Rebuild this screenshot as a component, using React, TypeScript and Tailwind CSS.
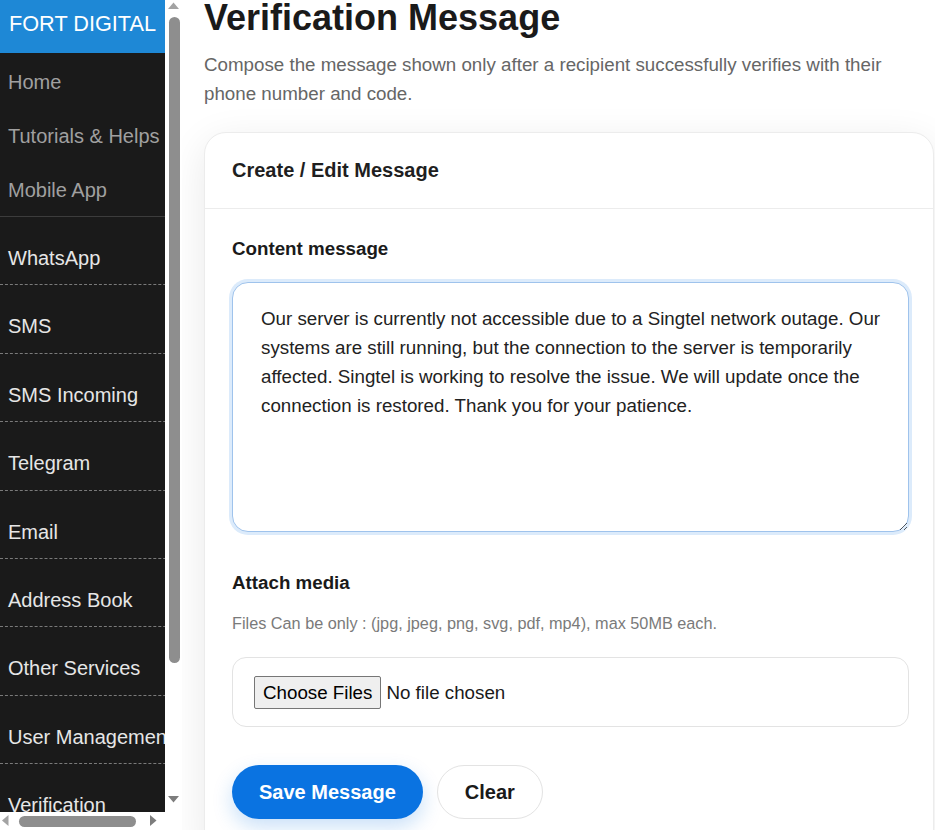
import React from "react";

const topItems = ["Home", "Tutorials & Helps", "Mobile App"];
const mainItems = [
  "WhatsApp",
  "SMS",
  "SMS Incoming",
  "Telegram",
  "Email",
  "Address Book",
  "Other Services",
  "User Management",
  "Verification",
  "Reports",
  "Logout",
];

function VScrollbar() {
  return (
    <div className="flex h-full flex-col bg-white">
      <svg width="17" height="15" viewBox="0 0 17 15" className="shrink-0">
        <polygon points="3,9 8.5,2.5 14,9" fill="#a3a3a3" />
      </svg>
      <div className="ml-[3.5px] mt-[2px] h-[646px] w-[11px] rounded-full bg-[#8e8e8e]" />
      <div className="flex-1" />
      <svg width="17" height="15" viewBox="0 0 17 15" className="mb-[4px] shrink-0">
        <polygon points="3,3 8.5,9.5 14,3" fill="#7d7d7d" />
      </svg>
    </div>
  );
}

function HScrollbar() {
  return (
    <div className="flex h-full items-center bg-white">
      <svg width="15" height="18" viewBox="0 0 15 18" className="shrink-0">
        <polygon points="8.5,3 2,8.5 8.5,14" fill="#a3a3a3" />
      </svg>
      <div className="ml-[4px] h-[11px] w-[117px] rounded-full bg-[#8e8e8e]" />
      <div className="flex-1" />
      <svg width="15" height="18" viewBox="0 0 15 18" className="mr-[2px] shrink-0">
        <polygon points="2,3 8.5,8.5 2,14" fill="#7d7d7d" />
      </svg>
    </div>
  );
}

export default function App() {
  return (
    <div className="flex h-[830px] w-[935px] overflow-hidden bg-white font-['Liberation_Sans',Arial,sans-serif]">
      <aside className="grid h-full w-[182px] shrink-0 grid-cols-[165px_17px] grid-rows-[812px_18px] bg-white">
        <div className="overflow-hidden bg-[#1a1a1a]">
          <div className="w-[186px] bg-[#1a1a1a] pb-[16px]">
            <div className="h-[53px] whitespace-nowrap bg-[#1e88d6] pl-[9px] pt-[11px] text-[21.7px] leading-[26px] text-white">
              FORT DIGITAL
            </div>
            <div>
              {topItems.map((t) => (
                <div
                  key={t}
                  className="h-[54px] whitespace-nowrap pl-[8px] pt-[17.5px] text-[20px] leading-[23px] text-[#a0a0a0]"
                >
                  {t}
                </div>
              ))}
            </div>
            <div className="mt-[1px] h-[1px] bg-[#3c3c3c]" />
            <div>
              {mainItems.map((t) => (
                <div
                  key={t}
                  className="h-[68.4px] whitespace-nowrap border-b border-dashed border-[#7a7a7a] pl-[8px] pt-[30px] text-[20px] leading-[23px] text-[#e6e6e6]"
                >
                  {t}
                </div>
              ))}
            </div>
          </div>
        </div>
        <VScrollbar />
        <HScrollbar />
        <div className="bg-white" />
      </aside>

      <main className="min-w-0 flex-1 overflow-hidden bg-white pl-[22px]">
        <h1 className="whitespace-nowrap text-[36px] font-bold leading-[36px] text-[#1a1a1a]">
          Verification Message
        </h1>
        <p className="mt-[14px] max-w-[710px] text-[18.75px] leading-[29px] text-[#666666]">
          Compose the message shown only after a recipient successfully verifies with their phone
          number and code.
        </p>

        <section className="mt-[24px] w-[730px] rounded-[22px] border border-[#ececec] bg-white shadow-[0_10px_40px_rgba(0,0,0,0.09)]">
          <div className="border-b border-[#ececec] pb-[23px] pl-[27px] pt-[22px] text-[20px] font-bold leading-[30px] text-[#1f1f1f]">
            Create / Edit Message
          </div>
          <div className="pb-[40px] pl-[27px] pr-[24px] pt-[26px]">
            <div className="text-[18.75px] font-bold leading-[28px] text-[#1a1a1a]">
              Content message
            </div>
            <textarea
              className="mt-[19px] block h-[250px] w-full resize-y rounded-[16px] border border-[#9fc3ec] bg-white pl-[28px] pr-[24px] pt-[21px] text-[18.75px] leading-[29px] text-[#222222] shadow-[0_0_0_3px_#dcebfb] outline-none"
              defaultValue="Our server is currently not accessible due to a Singtel network outage. Our systems are still running, but the connection to the server is temporarily affected. Singtel is working to resolve the issue. We will update once the connection is restored. Thank you for your patience."
            />

            <div className="mt-[37px] text-[18.75px] font-bold leading-[28px] text-[#1a1a1a]">
              Attach media
            </div>
            <div className="mt-[14px] text-[16.25px] leading-[24px] text-[#7a7a7a]">
              Files Can be only : (jpg, jpeg, png, svg, pdf, mp4), max 50MB each.
            </div>
            <div className="mt-[22px] flex h-[70px] items-center rounded-[14px] border border-[#e3e3e3] pl-[21px]">
              <input
                type="file"
                multiple
                className="text-[18.75px] leading-[21px] text-[#1a1a1a] file:mr-[5px] file:rounded-[2px] file:border file:border-[#767676] file:bg-[#efefef] file:px-[8px] file:py-[5px] file:text-black"
              />
            </div>

            <div className="mt-[38px] flex gap-[14px]">
              <button className="h-[54px] rounded-full bg-[#0a73e1] px-[27px] text-[20px] font-bold text-white shadow-[0_8px_20px_rgba(10,115,225,0.22)]">
                Save Message
              </button>
              <button className="h-[54px] rounded-full border border-[#e3e3e3] bg-white px-[27px] text-[20px] font-bold text-[#1a1a1a]">
                Clear
              </button>
            </div>
          </div>
        </section>
      </main>
    </div>
  );
}
